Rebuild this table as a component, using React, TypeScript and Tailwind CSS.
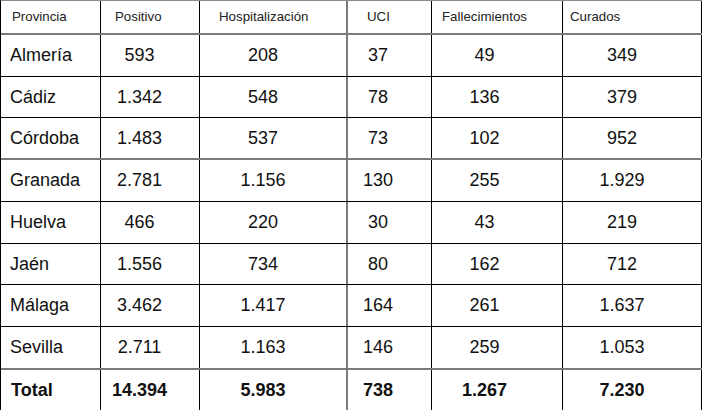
const rows = [
  { name: "Almería", h: "h-[42px]", line: "border-b border-black", v: ["593", "208", "37", "49", "349"] },
  { name: "Cádiz", h: "h-[41px]", line: "border-b border-black", v: ["1.342", "548", "78", "136", "379"] },
  { name: "Córdoba", h: "h-[42px]", line: "border-b-2 border-[#7a7a7a]", v: ["1.483", "537", "73", "102", "952"] },
  { name: "Granada", h: "h-[42px]", line: "border-b border-black", v: ["2.781", "1.156", "130", "255", "1.929"] },
  { name: "Huelva", h: "h-[42px]", line: "border-b border-black", v: ["466", "220", "30", "43", "219"] },
  { name: "Jaén", h: "h-[41px]", line: "border-b border-black", v: ["1.556", "734", "80", "162", "712"] },
  { name: "Málaga", h: "h-[42px]", line: "border-b border-black", v: ["3.462", "1.417", "164", "261", "1.637"] },
  { name: "Sevilla", h: "h-[43px]", line: "border-b-2 border-[#7a7a7a]", v: ["2.711", "1.163", "146", "259", "1.053"] },
];

const total = ["14.394", "5.983", "738", "1.267", "7.230"];

// column cells: width + right rule + padding used to offset the centred numbers
const cols = [
  "w-[99px] border-r border-black pr-[21px]",
  "w-[148px] border-r-2 border-[#7a7a7a] pr-[20px]",
  "w-[84px] border-r border-black pr-[23px]",
  "w-[131px] border-r border-black pr-[25px]",
  "w-[139px] border-r border-black pr-[20px]",
];

const headers = [
  { label: "Positivo", cls: "w-[99px] border-r border-black pl-[14px]" },
  { label: "Hospitalización", cls: "w-[148px] border-r-2 border-[#7a7a7a] pl-[19px]" },
  { label: "UCI", cls: "w-[84px] border-r border-black pl-[19px]" },
  { label: "Fallecimientos", cls: "w-[131px] border-r border-black pl-[10px]" },
  { label: "Curados", cls: "w-[139px] border-r border-black pl-[7px]" },
];

function Row({ name, h, line, v, bold }: { name: string; h: string; line: string; v: string[]; bold?: boolean }) {
  return (
    <div className={`flex ${h} ${line} text-[18px] text-[#111] ${bold ? "font-bold" : ""}`}>
      <div className={`w-[100px] border-r border-black flex items-center ${bold ? "pl-[10px]" : "pl-[9px]"}`}>{name}</div>
      {v.map((x, i) => (
        <div key={i} className={`${cols[i]} flex items-center justify-center`}>{x}</div>
      ))}
    </div>
  );
}

export default function App() {
  return (
    <div className="w-[703px] h-[410px] bg-white overflow-hidden" style={{ fontFamily: '"Liberation Sans", Arial, sans-serif' }}>
      <div className="w-[702px] border-l border-t border-black border-t-[#8a8a8a]">
        {/* header */}
        <div className="flex h-[34px] border-b-2 border-[#7a7a7a] text-[13.3px] text-[#222]">
          <div className="w-[100px] border-r border-black flex items-center pl-[11px]">Provincia</div>
          {headers.map(hd => (
            <div key={hd.label} className={`${hd.cls} flex items-center`}>{hd.label}</div>
          ))}
        </div>

        {rows.map(r => <Row key={r.name} {...r} />)}

        <Row name="Total" h="h-[41px]" line="" v={total} bold />
      </div>
    </div>
  );
}
